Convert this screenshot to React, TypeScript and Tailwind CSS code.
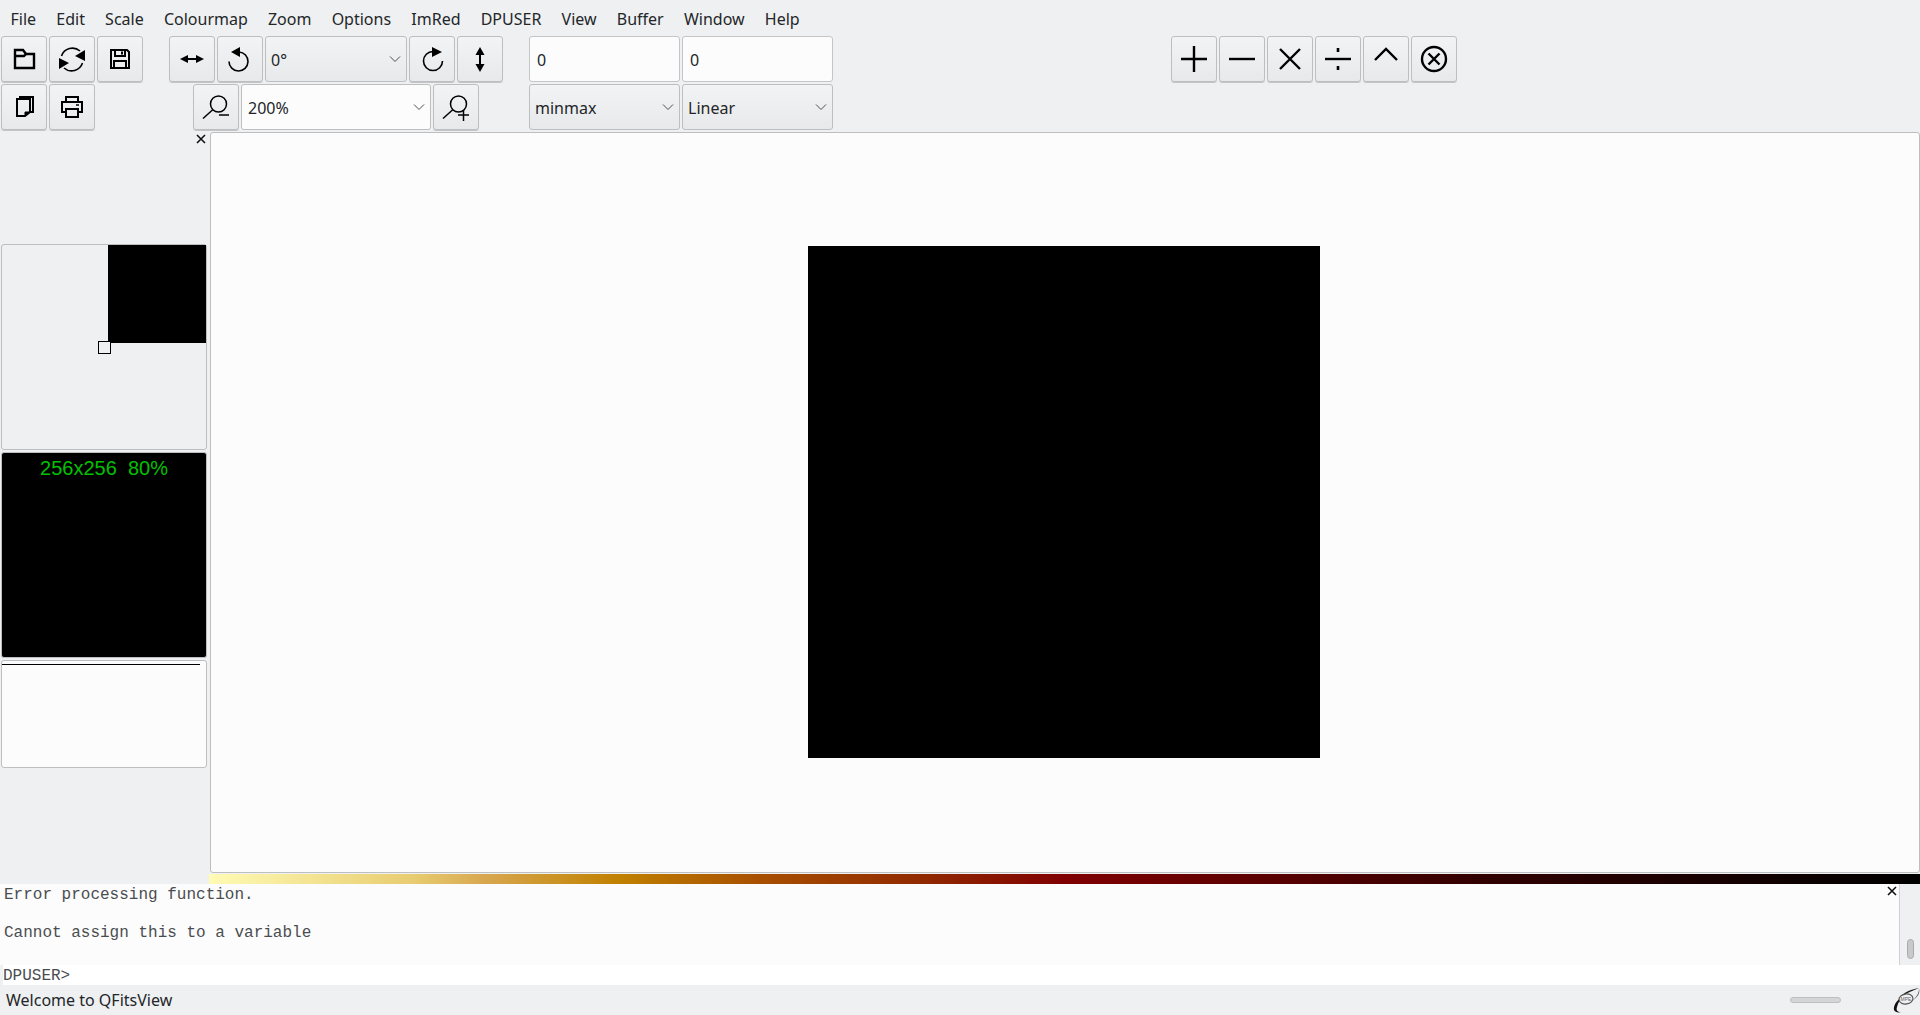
import React from "react";

const menus = ["File", "Edit", "Scale", "Colourmap", "Zoom", "Options", "ImRed", "DPUSER", "View", "Buffer", "Window", "Help"];

const Icon = ({ children }: { children: React.ReactNode }) => (
  <svg width={32} height={32} viewBox="0 0 32 32" fill="none" stroke="#000" strokeWidth="2">
    {children}
  </svg>
);

const ToolButton = ({ children }: { children: React.ReactNode }) => (
  <div className="w-[46px] h-[46px] shrink-0 flex items-center justify-center rounded-[3px] border border-[#bcbebf] bg-gradient-to-b from-[#f2f3f4] to-[#e8e9ea] shadow-[0_1px_0_#c4c5c6]">
    {children}
  </div>
);

const Chevron = () => (
  <svg width="12" height="8" viewBox="0 0 12 8" fill="none" stroke="#4d4d4d" strokeWidth="1" className="shrink-0">
    <path d="M1 1.5 L6 6.5 L11 1.5" />
  </svg>
);

const Combo = ({ label, width, white }: { label: string; width: string; white?: boolean }) => (
  <div
    className={`${width} h-[46px] shrink-0 flex items-center justify-between pr-[5px] rounded-[3px] border border-[#bcbebf] text-[16px] text-[#232629] ${
      white ? "pl-[6px] bg-[#fcfcfc]" : "pl-[5px] bg-gradient-to-b from-[#f2f3f4] to-[#e8e9ea]"
    }`}
  >
    <span className="pt-px">{label}</span>
    <Chevron />
  </div>
);

const Field = ({ value }: { value: string }) => (
  <div className="w-[151px] h-[46px] flex items-center pl-[7px] pt-px rounded-[3px] border border-[#c4c5c6] bg-[#fcfcfc] text-[16px] text-[#232629]">
    {value}
  </div>
);

const CloseX = () => (
  <svg width="10" height="10" viewBox="0 0 10 10" stroke="#111" strokeWidth="1.6" fill="none">
    <path d="M1 1 L9 9 M9 1 L1 9" />
  </svg>
);

const App = () => {
  return (
    <div className="w-[1920px] h-[1015px] overflow-hidden flex flex-col bg-[#eff0f1] text-[#232629] font-['Noto_Sans',sans-serif]">
      {/* menu bar */}
      <div className="h-9 flex items-center pt-px text-[16px]">
        {menus.map((m) => (
          <div key={m} className="px-[10.1px] first:pl-[10.5px]">
            {m}
          </div>
        ))}
      </div>

      {/* toolbars */}
      <div className="h-[96px] flex pl-px">
        <div className="w-[142px] flex flex-col gap-[2px]">
          <div className="flex gap-[2px]">
            <ToolButton>
              <Icon>
                <path d="M7 7 H15 L18 11 H26 V25 H7 Z" strokeWidth="2.4" />
                <path d="M7 13 H16 L18 11" strokeWidth="2.4" />
              </Icon>
            </ToolButton>
            <ToolButton>
              <Icon>
                <path d="M5.5 13 A11.5 11.5 0 0 1 24 8" strokeWidth="1.6" />
                <path d="M26.5 20 A11.5 11.5 0 0 1 8 25" strokeWidth="1.6" />
                <path d="M29 7 V18 L19 13 Z" fill="#000" stroke="none" />
                <path d="M3 15 V26 L13 20 Z" fill="#000" stroke="none" />
              </Icon>
            </ToolButton>
            <ToolButton>
              <Icon>
                <path d="M7 7 H23 L25 9 V25 H7 Z" strokeWidth="2" />
                <path d="M11 7 V13 H21 V7 M18 8.5 V11.5 M10 25 V18 H22 V25" strokeWidth="2" />
              </Icon>
            </ToolButton>
          </div>
          <div className="flex gap-[2px]">
            <ToolButton>
              <Icon>
                <path d="M12 8 V6 H25 V21 H22" strokeWidth="2" />
                <path d="M9 8 H22 V21 L17 25 H9 Z" strokeWidth="2" />
                <path d="M22 21 H17 V25 Z" fill="#000" strokeWidth="1" />
              </Icon>
            </ToolButton>
            <ToolButton>
              <Icon>
                <path d="M10 11 V6 H22 V11" strokeWidth="2" />
                <path d="M10 21 H6 V11 H26 V21 H22" strokeWidth="2" />
                <path d="M10 18 H22 V26 H10 Z" strokeWidth="2" />
                <path d="M20 14 H23" strokeWidth="1.5" />
              </Icon>
            </ToolButton>
          </div>
        </div>

        <div className="w-[334px] ml-[26px] flex flex-col gap-[2px]">
          <div className="flex gap-[2px]">
            <ToolButton>
              <Icon>
                <path d="M8 16 H24" strokeWidth="2" />
                <path d="M4 16 L12 12 V20 Z M28 16 L20 12 V20 Z" fill="#000" stroke="none" />
              </Icon>
            </ToolButton>
            <ToolButton>
              <Icon>
                <path d="M15 9 A9.5 9.5 0 1 1 5 18.5" strokeWidth="1.6" />
                <path d="M16 4 V14 L7 9 Z" fill="#000" stroke="none" />
              </Icon>
            </ToolButton>
            <Combo label="0°" width="w-[142px]" />
            <ToolButton>
              <Icon>
                <path d="M17 8.5 A9.5 9.5 0 1 0 26.5 18" strokeWidth="1.6" />
                <path d="M16 4 V14 L26 9 Z" fill="#000" stroke="none" />
              </Icon>
            </ToolButton>
            <ToolButton>
              <Icon>
                <path d="M16 9 V24" strokeWidth="2" />
                <path d="M16 4 L11.5 12 H20.5 Z M16 29 L11.5 21 H20.5 Z" fill="#000" stroke="none" />
              </Icon>
            </ToolButton>
          </div>
          <div className="flex gap-[2px] ml-[24px]">
            <ToolButton>
              <Icon>
                <circle cx="18.5" cy="13" r="8" strokeWidth="1.5" />
                <path d="M13 18.5 L3 27.5" strokeWidth="1.5" />
                <path d="M19 24 H29" strokeWidth="1.5" />
              </Icon>
            </ToolButton>
            <Combo label="200%" width="w-[190px]" white />
            <ToolButton>
              <Icon>
                <circle cx="18.5" cy="13" r="8" strokeWidth="1.5" />
                <path d="M13 18.5 L3 27.5" strokeWidth="1.5" />
                <path d="M18 24 H29 M23.5 19 V30" strokeWidth="1.5" />
              </Icon>
            </ToolButton>
          </div>
        </div>

        <div className="ml-[26px] flex flex-col gap-[2px]">
          <div className="flex gap-[2px]">
            <Field value="0" />
            <Field value="0" />
          </div>
          <div className="flex gap-[2px]">
            <Combo label="minmax" width="w-[151px]" />
            <Combo label="Linear" width="w-[151px]" />
          </div>
        </div>

        <div className="ml-[338px] flex gap-[2px]">
          <ToolButton>
            <Icon>
              <path d="M3 16 H29 M16 3 V29" strokeWidth="2.4" />
            </Icon>
          </ToolButton>
          <ToolButton>
            <Icon>
              <path d="M3 16 H29" strokeWidth="2.4" />
            </Icon>
          </ToolButton>
          <ToolButton>
            <Icon>
              <path d="M6 6 L26 26 M26 6 L6 26" strokeWidth="2.4" />
            </Icon>
          </ToolButton>
          <ToolButton>
            <Icon>
              <path d="M3 16 H29" strokeWidth="2.4" />
              <path d="M16 5 V9 M16 23 V27" strokeWidth="2.6" />
            </Icon>
          </ToolButton>
          <ToolButton>
            <Icon>
              <path d="M5 17 L16 6 L27 17" strokeWidth="2.4" />
            </Icon>
          </ToolButton>
          <ToolButton>
            <Icon>
              <circle cx="16" cy="16" r="12" strokeWidth="2.4" />
              <path d="M10.5 10.5 L21.5 21.5 M21.5 10.5 L10.5 21.5" strokeWidth="2.4" />
            </Icon>
          </ToolButton>
        </div>
      </div>

      <div className="flex h-[752px]">
        {/* sidebar */}
        <div className="w-[209px] shrink-0 flex flex-col pl-px">
          <div className="h-[112px] flex justify-end pr-[3px] pt-[2px]">
            <CloseX />
          </div>
          <div className="relative w-[206px] h-[206px] rounded-[3px] border border-[#bcbebf] bg-[#eff0f1] flex justify-end items-start">
            <div className="w-[98px] h-[98px] bg-black" />
            <div className="absolute left-[96px] top-[96px] w-[13px] h-[13px] border border-black bg-[#eff0f1]" />
          </div>
          <div className="mt-[2px] w-[206px] h-[206px] rounded-[3px] border border-[#bcbebf] bg-black flex justify-center">
            <span className="text-[20px] leading-[30px] whitespace-pre text-[#00c000] font-['Liberation_Sans',sans-serif]">
              {"256x256  80%"}
            </span>
          </div>
          <div className="mt-[2px] w-[206px] h-[108px] rounded-[3px] border border-[#bcbebf] bg-[#fcfcfc] pt-[3px]">
            <div className="w-[198px] h-px bg-black" />
          </div>
        </div>

        {/* image view */}
        <div className="flex-1 flex flex-col">
          <div className="flex-1 ml-px pb-[2px] pr-[2px] rounded-[3px] border border-[#bcbebf] bg-[#fcfcfc] flex items-center justify-center">
            <div className="w-[512px] h-[512px] bg-black" />
          </div>
          <div className="mt-px h-[10px] bg-[linear-gradient(to_right,#fffbb5_0%,#e8cc70_12%,#d8a850_16%,#c08000_24%,#a85000_32%,#902800_42%,#800000_50%,#500000_65%,#300000_75%,#000000_100%)]" />
        </div>
      </div>

      {/* console */}
      <div className="flex h-[81px]">
        <div className="relative flex-1 bg-[#fcfcfc] pl-[4px] pt-[2px] font-['Liberation_Mono',monospace] text-[16px] leading-[19px] text-[#4a4d50]">
          <div>Error processing function.</div>
          <div>&nbsp;</div>
          <div>Cannot assign this to a variable</div>
          <div className="absolute right-[2px] top-[2px]">
            <CloseX />
          </div>
        </div>
        <div className="w-[21px] border-l border-[#d0d1d2] flex justify-center items-end pb-[6px]">
          <div className="w-[7px] h-[20px] rounded-[4px] border border-[#a8aaab] bg-[#c8c9ca]" />
        </div>
      </div>
      <div className="h-[20px] ml-[3px] pt-px bg-white font-['Liberation_Mono',monospace] text-[16px] leading-[20px] text-[#4a4d50]">
        DPUSER&gt;
      </div>

      {/* status bar */}
      <div className="h-[30px] flex items-center pl-[6px] text-[16px]">
        <span className="flex-1">Welcome to QFitsView</span>
        <div className="w-[51px] h-[6px] rounded-[3px] border border-[#bcbebf] bg-[#d4d5d6]" />
        <div className="ml-[51px] w-[28px]">
          <svg width="28" height="26" viewBox="0 0 28 26">
            <path d="M27 1 C20 2 12 5 8 10 C13 7 20 4 27 1 Z" fill="#222" />
            <path d="M14 8 C6 11 1 18 2 23 C3 25 6 26 9 25 C5 25 4 23 5 20 C6 15 9 11 14 8 Z" fill="#111" />
            <path d="M27 2 C29 8 22 14 13 18 C20 15 27 9 27 2 Z" fill="#555" />
            <ellipse cx="14" cy="12" rx="7" ry="5" fill="#eff0f1" stroke="#555" strokeWidth="1.2" transform="rotate(-8 14 12)" />
            <text x="14" y="14" fontSize="5" fill="#666" textAnchor="middle" fontFamily="Liberation Sans">MPE</text>
          </svg>
        </div>
      </div>
    </div>
  );
};

export default App;
